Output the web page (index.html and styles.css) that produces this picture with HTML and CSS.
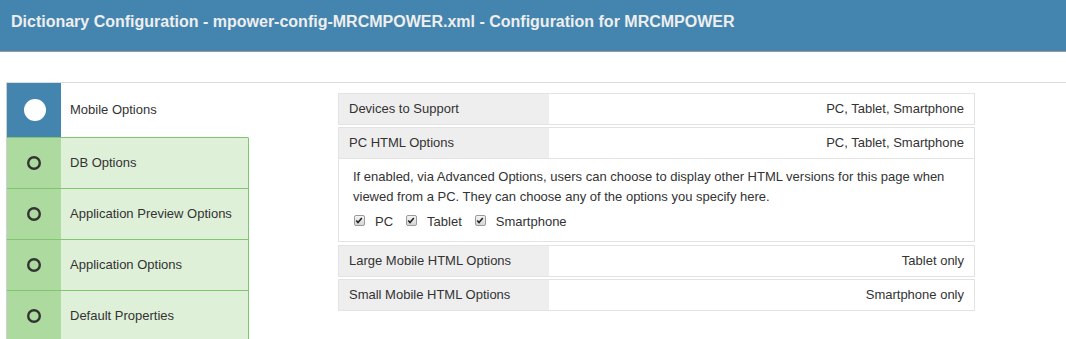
FILE: index.html
```html
<!DOCTYPE html>
<html>
<head>
<meta charset="utf-8">
<link rel="stylesheet" href="styles.css">
</head>
<body>
<header class="topbar">Dictionary Configuration - mpower-config-MRCMPOWER.xml - Configuration for MRCMPOWER</header>
<div class="main">
  <nav class="sidebar">
    <div class="item active">
      <div class="icon"><svg width="24" height="24" viewBox="0 0 24 24"><circle cx="12" cy="12" r="11" fill="#fff"/></svg></div>
      <div class="label">Mobile Options</div>
    </div>
    <div class="item">
      <div class="icon"><svg width="16" height="16" viewBox="0 0 16 16"><circle cx="8" cy="8" r="5.8" fill="none" stroke="#333" stroke-width="2.4"/></svg></div>
      <div class="label">DB Options</div>
    </div>
    <div class="item">
      <div class="icon"><svg width="16" height="16" viewBox="0 0 16 16"><circle cx="8" cy="8" r="5.8" fill="none" stroke="#333" stroke-width="2.4"/></svg></div>
      <div class="label">Application Preview Options</div>
    </div>
    <div class="item">
      <div class="icon"><svg width="16" height="16" viewBox="0 0 16 16"><circle cx="8" cy="8" r="5.8" fill="none" stroke="#333" stroke-width="2.4"/></svg></div>
      <div class="label">Application Options</div>
    </div>
    <div class="item">
      <div class="icon"><svg width="16" height="16" viewBox="0 0 16 16"><circle cx="8" cy="8" r="5.8" fill="none" stroke="#333" stroke-width="2.4"/></svg></div>
      <div class="label">Default Properties</div>
    </div>
  </nav>
  <section class="panel">
    <div class="block">
      <div class="row"><div class="key">Devices to Support</div><div class="val">PC, Tablet, Smartphone</div></div>
    </div>
    <div class="block tall">
      <div class="row bordered"><div class="key">PC HTML Options</div><div class="val">PC, Tablet, Smartphone</div></div>
      <div class="desc">
        <p>If enabled, via Advanced Options, users can choose to display other HTML versions for this page when viewed from a PC. They can choose any of the options you specify here.</p>
        <div class="checks">
          <span class="cb"><svg width="11" height="11" viewBox="0 0 11 11"><path d="M2.4 5.6 L4.4 7.8 L8.6 2.8" fill="none" stroke="#222" stroke-width="1.7"/></svg></span><span class="cbl">PC</span>
          <span class="cb"><svg width="11" height="11" viewBox="0 0 11 11"><path d="M2.4 5.6 L4.4 7.8 L8.6 2.8" fill="none" stroke="#222" stroke-width="1.7"/></svg></span><span class="cbl">Tablet</span>
          <span class="cb"><svg width="11" height="11" viewBox="0 0 11 11"><path d="M2.4 5.6 L4.4 7.8 L8.6 2.8" fill="none" stroke="#222" stroke-width="1.7"/></svg></span><span class="cbl">Smartphone</span>
        </div>
      </div>
    </div>
    <div class="block">
      <div class="row"><div class="key">Large Mobile HTML Options</div><div class="val">Tablet only</div></div>
    </div>
    <div class="block">
      <div class="row"><div class="key">Small Mobile HTML Options</div><div class="val">Smartphone only</div></div>
    </div>
  </section>
</div>
</body>
</html>
```
FILE: styles.css
```css
* { box-sizing: border-box; }
html, body { margin: 0; padding: 0; background: #fff; }
body {
  font-family: "Liberation Sans", Arial, sans-serif;
  font-size: 13px;
  color: #333;
  overflow: hidden;
}
.topbar {
  height: 52px;
  background: #4485b0;
  border-bottom: 1px solid #9a9a9a;
  color: #eeeeee;
  font-weight: bold;
  font-size: 16px;
  line-height: 22px;
  padding: 11px 0 0 11px;
}
.main {
  margin: 30px 0 0 6px;
  border-top: 1px solid #dcdcdc;
  display: flex;
  align-items: flex-start;
}
.sidebar {
  width: 243px;
  border-left: 1px solid #cfcfcf;
  flex: none;
}
.item {
  display: flex;
  height: 51px;
  border-bottom: 1px solid #80c66e;
  border-right: 1px solid #80c66e;
}
.item.active {
  height: 55px;
  border-right-color: #fff;
}
.icon {
  width: 54px;
  flex: none;
  background: #addb9f;
  display: flex;
  align-items: center;
  justify-content: center;
}
.item.active .icon { background: #4485b0; padding-left: 2px; }
.label {
  flex: 1;
  background: #dff0d8;
  display: flex;
  align-items: center;
  padding-left: 9px;
  line-height: 20px;
}
.item.active .label { background: #fff; }
.panel {
  margin: 10px 0 0 89px;
  width: 637px;
  flex: none;
}
.block {
  border: 1px solid #e3e3e3;
  margin-bottom: 2px;
}
.block.tall { margin-bottom: 3px; }
.row {
  display: grid;
  grid-template-columns: 210px 1fr;
  height: 30px;
}
.row.bordered { border-bottom: 1px solid #e3e3e3; height: 31px; }
.key {
  background: #eeeeee;
  padding: 5px 10px;
  line-height: 20px;
}
.val {
  text-align: right;
  padding: 5px 10px;
  line-height: 20px;
}
.desc {
  padding: 8px 14px 9px 14px;
  line-height: 20px;
}
.desc p { margin: 0; }
.checks {
  margin-top: 5px;
  display: flex;
  align-items: center;
}
.cb {
  width: 11px;
  height: 11px;
  border: 1px solid #9a9a9a;
  border-radius: 2px;
  background: linear-gradient(#f4f4f4, #d6d6d6);
  display: inline-flex;
  margin-left: 1px;
  margin-right: 10px;
  margin-top: -3px;
}
.cb svg { display: block; margin: -1px 0 0 -1px; }
.cbl { margin-right: 12px; }
```
